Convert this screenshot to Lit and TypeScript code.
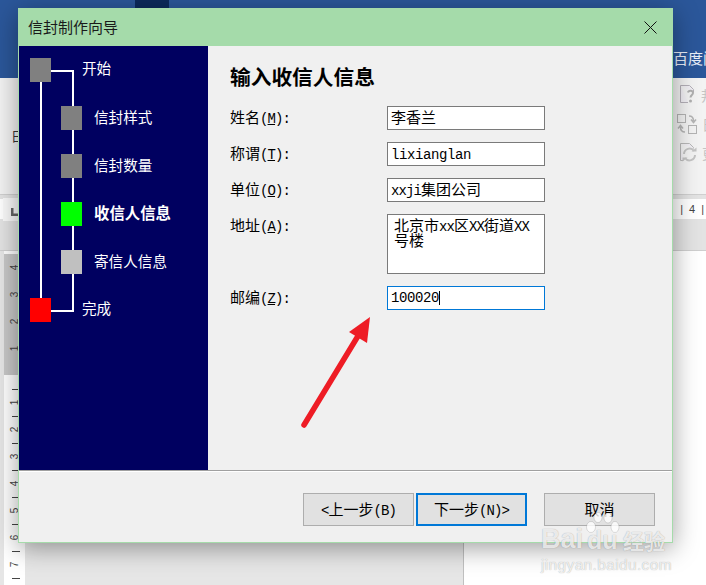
import { LitElement, html, css } from "lit";
import { customElement } from "lit/decorators.js";

const STEPS = [
  { label: "信封样式", y: 106, color: "#808080", bold: false },
  { label: "信封数量", y: 154, color: "#808080", bold: false },
  { label: "收信人信息", y: 202, color: "#00ff00", bold: true },
  { label: "寄信人信息", y: 250, color: "#c0c0c0", bold: false },
];
const RULER = ["4", "3", "2", "1", "", "1", "2", "3", "4", "5", "6", "7"];

@customElement("app-root")
export class AppRoot extends LitElement {
  static styles = css`
    :host {
      display: block;
      position: relative;
      width: 706px;
      height: 585px;
      overflow: hidden;
      font-family: "Noto Sans CJK SC", sans-serif;
      font-size: 15px;
      color: #000;
      background: #fff;
    }
    .bg { display: flex; flex-direction: column; width: 706px; height: 585px; overflow: hidden; }
    .top { flex: none; height: 78px; background: #2b579a; display: flex; align-items: flex-start; }
    .dark { flex: none; margin-left: 135px; width: 34px; height: 8px; background: #0c2a5c; }
    .brand { flex: none; margin-left: 504px; margin-top: 47px; line-height: 22px; color: #e8eef8; white-space: nowrap; }
    .ribbon { flex: none; height: 116px; background: #f3f3f3; display: flex; align-items: flex-start; }
    .mark { flex: none; margin: 48px 0 0 11px; font-size: 13px; line-height: 20px; color: #333; }
    .tools { flex: none; margin-left: auto; width: 33px; display: flex; flex-direction: column; overflow: hidden; padding-top: 2px; box-sizing: border-box; }
    .tool { display: flex; height: 29px; align-items: center; gap: 5px; padding-left: 6px; color: #c4c4c4; font-size: 14px; white-space: nowrap; }
    .tool svg { flex: none; }
    .rulebar { flex: none; height: 57px; background: #e3e3e3; border-top: 1px solid #d0d0d0; border-bottom: 1px solid #cfcfcf; box-sizing: border-box; }
    .strip { height: 20px; margin-top: 4px; background: #fff; display: flex; align-items: center; position: relative; }
    .tab { flex: none; margin-left: 3px; width: 15px; height: 23px; background: #fafafa; display: flex; align-items: flex-end; }
    .tab svg { display: block; margin: 0 0 5px 8px; }
    .hticks { margin-left: auto; display: flex; gap: 6px; font: 11px "Liberation Sans", sans-serif; color: #444; padding-right: 2px; }
    .doc { flex: 1; display: flex; min-height: 0; background: #fff; }
    .edge { flex: none; width: 4px; background: #e6e6e6; }
    .vruler { flex: none; width: 21px; background: #fff; padding-top: 3px; box-sizing: border-box; }
    .cell { height: 27px; width: 14px; position: relative; display: flex; align-items: center; justify-content: flex-end; }
    .cell.shade { background: #c8c8c8; }
    .cell.half { background: linear-gradient(#c8c8c8 50%, transparent 50%); }
    .num { font: 10px "Liberation Sans", sans-serif; color: #444; transform: rotate(-90deg); }
    .tick { position: absolute; left: 8px; bottom: -1px; width: 8px; height: 1px; background: #444; }
    .desk { flex: none; width: 438px; background: #e6e6e6; border-right: 1px solid #c0c0c0; }

    .dialog {
      position: absolute;
      left: 18px;
      top: 8px;
      width: 655px;
      height: 535px;
      box-sizing: border-box;
      border: 1px solid #a5dbaa;
      background: #f0f0f0;
      box-shadow: 0 5px 24px rgba(0, 0, 0, 0.38);
      display: flex;
      flex-direction: column;
    }
    .title { flex: none; box-sizing: border-box; height: 38px; margin: -1px -1px 0; padding: 0 16px 2px 10px; background: #a5dbaa; display: flex; align-items: center; justify-content: space-between; color: #1a1a1a; }
    .title svg { display: block; margin-top: 2px; }
    .body { flex: 1; display: flex; min-height: 0; }
    .side { flex: none; width: 189px; background: #000060; position: relative; color: #fff; }
    .ln { position: absolute; background: #fff; }
    .node { position: absolute; width: 21px; height: 24px; }
    .slabel { position: absolute; line-height: 24px; white-space: nowrap; font-size: 14.6px; }
    .slabel.b { font-weight: 700; font-size: 15.4px; }
    .main { flex: 1; padding: 16px 0 0 22px; box-sizing: border-box; }
    h1 { margin: 0 0 16px; font-size: 20.7px; line-height: 28px; font-weight: 700; }
    .form { display: grid; grid-template-columns: 157px 158px; grid-template-rows: 24px 24px 24px 60px 24px; row-gap: 12px; }
    .lab { line-height: 22px; white-space: nowrap; }
    .m { font-family: "Liberation Mono", monospace; font-size: 14px; letter-spacing: -0.9px; }
    .w { letter-spacing: -0.4px; }
    .field { border: 1px solid #7a7a7a; background: #fff; box-sizing: border-box; padding-left: 3px; line-height: 20px; white-space: nowrap; overflow: hidden; }
    .field.area { padding: 2px 0 0 6px; }
    .line { height: 15px; line-height: 15px; }
    .field.focus { border-color: #0078d7; display: flex; align-items: center; }
    .caret { display: inline-block; width: 1px; height: 14px; background: #000; flex: none; }
    .foot { flex: none; height: 72px; border-top: 1px solid #a0a0a0; box-shadow: inset 0 1px 0 #fff; box-sizing: border-box; display: flex; justify-content: flex-end; padding: 22px 17px 0 0; }
    button { font: inherit; color: #000; flex: none; width: 111px; height: 33px; padding: 0 0 2px; margin: 0 0 0 2px; background: #e1e1e1; border: 1px solid #adadad; border-radius: 0; }
    button.def { border: 2px solid #0078d7; }
    button.cancel { margin-left: 17px; }

    .arrow { position: absolute; left: 295px; top: 310px; display: block; }
    .wm { position: absolute; left: 540px; top: 512px; width: 130px; height: 66px; color: rgba(255, 255, 255, 0.78); text-shadow: 0 0 1px rgba(0, 0, 0, 0.35); white-space: nowrap; }
    .wm .paw { position: absolute; left: 44px; top: 0; }
    .wm .big { position: absolute; left: 1px; top: 10px; font: 700 27px/34px "Liberation Sans", sans-serif; }
    .wm .du { position: absolute; left: 47px; top: 11px; font: 700 25px/34px "Liberation Sans", sans-serif; }
    .wm .cn { position: absolute; left: 83px; top: 12px; font-size: 21px; font-weight: 700; line-height: 32px; }
    .wm .url { position: absolute; left: 1px; top: 44px; font: 15.5px/18px "Liberation Sans", sans-serif; letter-spacing: 0.35px; }
  `;

  render() {
    return html`
      <div class="bg">
        <div class="top"><div class="dark"></div><div class="brand">百度阅</div></div>
        <div class="ribbon">
          <div class="mark">日</div>
          <div class="tools">
            <div class="tool">
              <svg width="17" height="19" viewBox="0 0 17 19" fill="none">
                <path d="M1.5 .5h9l4 4v3M1.5 .5v17h7.500" stroke="#b4b0b8" fill="#f1eff4"/>
                <path d="M9 7.500c.5-2.500 5-2.500 5 .5 0 2-2.500 2-2.500 4.500" stroke="#b0b0b0" stroke-width="2"/>
                <circle cx="11.500" cy="16" r="1.500" fill="#b0b0b0"/>
              </svg>
              <span>邦</span>
            </div>
            <div class="tool">
              <svg width="20" height="20" viewBox="0 0 20 20" fill="none" style="margin-left:-2px">
                <rect x=".5" y=".5" width="8" height="8" stroke="#b4b4b4"/>
                <rect x="11.500" y="11.500" width="8" height="8" stroke="#b4b4b4"/>
                <path d="M12 2c3 0 4.500 1 4.500 5M14 5.500l2.500 3 2.500-3" stroke="#b4b4b4" stroke-width="1.500"/>
                <path d="M8 18c-3 0-4.500-1-4.500-5M1 14.500l2.500-3 2.500 3" stroke="#b4b4b4" stroke-width="1.500"/>
              </svg>
              <span>日</span>
            </div>
            <div class="tool">
              <svg width="18" height="19" viewBox="0 0 18 19" fill="none">
                <path d="M1.500 .5h9l4 4v1M1.500 .5v17h3" stroke="#b8b8b8" fill="#f1eff4"/>
                <path d="M5 11a5.500 5.500 0 0 1 10-3M16 12a5.500 5.500 0 0 1-10 3" stroke="#c4c4c4" stroke-width="2"/>
                <path d="M12.500 8.500h5v-4zM8.500 14.500h-5v4z" fill="#c4c4c4"/>
              </svg>
              <span>更</span>
            </div>
          </div>
        </div>
        <div class="rulebar">
          <div class="strip">
            <div class="tab"><svg width="7" height="8" viewBox="0 0 7 8"><path d="M0 0h2.500v5.500H7V8H0z" fill="#666"/></svg></div>
            <div class="hticks"><span>|</span><span>4</span><span>|</span></div>
          </div>
        </div>
        <div class="doc">
          <div class="edge"></div>
          <div class="vruler">
            ${RULER.map(
              (n, i) => html`<div class="cell ${i < 4 ? "shade" : i === 4 ? "half" : ""}"><span class="num">${n}</span><i class="tick"></i></div>`
            )}
          </div>
          <div class="desk"></div>
        </div>
      </div>

      <div class="dialog">
        <div class="title">
          <span>信封制作向导</span>
          <svg width="13" height="13" viewBox="0 0 13 13"><path d="M.5 .5l12 12M12.500 .5l-12 12" stroke="#111" stroke-width="1"/></svg>
        </div>
        <div class="body">
          <div class="side">
            <div class="ln" style="left:21px;top:36px;width:2px;height:216px"></div>
            <div class="ln" style="left:53px;top:24px;width:2px;height:242px"></div>
            <div class="ln" style="left:32px;top:24px;width:23px;height:2px"></div>
            <div class="ln" style="left:32px;top:264px;width:23px;height:2px"></div>
            <div class="node" style="left:11px;top:12px;background:#808080"></div>
            <div class="slabel" style="left:63px;top:10px">开始</div>
            ${STEPS.map(
              (s) => html`
                <div class="node" style="left:42px;top:${s.y - 46}px;background:${s.color}"></div>
                <div class="slabel ${s.bold ? "b" : ""}" style="left:75px;top:${s.y - 46 - 1 - (s.bold ? 1 : 0)}px">${s.label}</div>
              `
            )}
            <div class="node" style="left:11px;top:252px;background:#ff0000"></div>
            <div class="slabel" style="left:63px;top:250px">完成</div>
          </div>
          <div class="main">
            <h1>输入收信人信息</h1>
            <div class="form">
              <div class="lab">姓名<span class="m">(<u>M</u>):</span></div>
              <div class="field">李香兰</div>
              <div class="lab">称谓<span class="m">(<u>T</u>):</span></div>
              <div class="field"><span class="m w">lixianglan</span></div>
              <div class="lab">单位<span class="m">(<u>O</u>):</span></div>
              <div class="field"><span class="m">xxji</span>集团公司</div>
              <div class="lab">地址<span class="m">(<u>A</u>):</span></div>
              <div class="field area">
                <div class="line">北京市<span class="m">xx</span>区<span class="m">XX</span>街道<span class="m">XX</span></div>
                <div class="line">号楼</div>
              </div>
              <div class="lab">邮编<span class="m">(<u>Z</u>):</span></div>
              <div class="field focus"><span class="m w">100020</span><span class="caret"></span></div>
            </div>
          </div>
        </div>
        <div class="foot">
          <button><span class="m">&lt;</span>上一步<span class="m">(B)</span></button>
          <button class="def">下一步<span class="m">(N)&gt;</span></button>
          <button class="cancel">取消</button>
        </div>
      </div>

      <svg class="arrow" width="90" height="125" viewBox="295 310 90 125">
        <path d="M304 425L358 336" stroke="#ee1c25" stroke-width="5.500" stroke-linecap="round" fill="none"/>
        <path d="M370 317L349 332L367 343z" fill="#ee1c25"/>
      </svg>

      <div class="wm">
        <svg class="paw" width="36" height="30" viewBox="0 0 36 30" fill="rgba(255,255,255,.8)" stroke="rgba(0,0,0,.2)" stroke-width=".6">
          <ellipse cx="7" cy="15" rx="4.500" ry="5.500"/>
          <ellipse cx="14" cy="5.500" rx="4" ry="5"/>
          <ellipse cx="24" cy="6" rx="4" ry="5"/>
          <ellipse cx="31" cy="15" rx="4" ry="5.500"/>
        </svg>
        <span class="big">Bai</span>
        <span class="du">du</span>
        <span class="cn">经验</span>
        <span class="url">jingyan.baidu.com</span>
      </div>
    `;
  }
}
